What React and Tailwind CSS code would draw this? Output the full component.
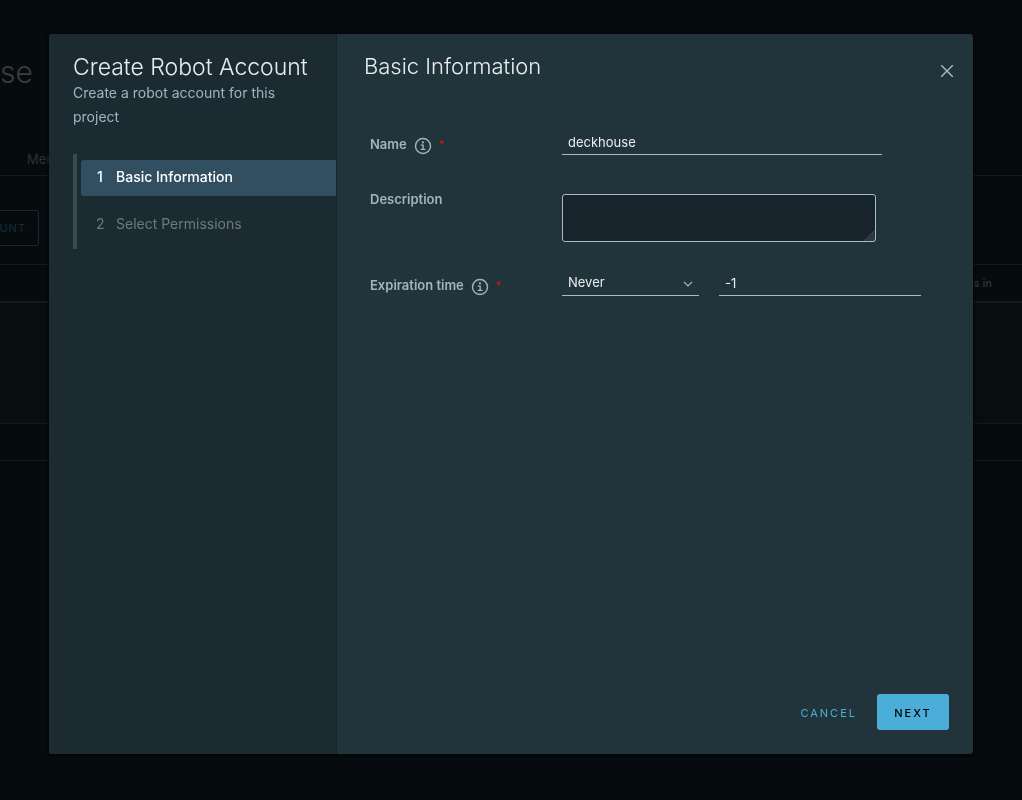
import { useState } from 'react';

const fieldBase =
  'block h-6 border-0 border-b border-[#acbac3] bg-transparent px-1.5 pb-0.5 text-[13px] text-[#e9ecef] outline-none';

const labelBase = 'flex w-48 shrink-0 items-center gap-[7px] pt-px text-[13px] leading-6 font-semibold text-[#a3b4be]';

const steps = ['Basic Information', 'Select Permissions'];

const InfoIcon = () => (
  <svg viewBox="0 0 36 36" className="mt-1 size-[18px]" fill="currentColor" aria-hidden="true">
    <circle cx="18" cy="18" r="15" fill="none" stroke="currentColor" strokeWidth="2.8" />
    <circle cx="17.9" cy="10.8" r="2.2" />
    <path d="M13.4 15h6.2v8.6H23V26H13.4v-2.4H17v-6.2h-3.6z" />
  </svg>
);

const CloseIcon = () => (
  <svg viewBox="0 0 12 12" className="size-3" fill="none" stroke="currentColor" strokeWidth="1.4" aria-hidden="true">
    <path d="M0.4 0.4 11.6 11.6M11.6 0.4 0.4 11.6" strokeLinecap="round" />
  </svg>
);

const Required = () => <span className="text-[11px] text-[#c21d00]">*</span>;

/* Project page behind the dialog */
const ProjectPage = () => (
  <div className="min-h-screen overflow-hidden bg-[#060b0e] pt-[54px]">
    <h1 className="text-[30px] leading-9 font-light text-[#3a3c3d]">se</h1>

    <nav className="mt-[51px] flex h-[35px] border-b border-[#14191c] pl-[27px]">
      <a href="#members" className="pt-1.5 text-[13px] leading-6 text-[#2c3134]">
        Members
      </a>
    </nav>

    <button className="mt-[34px] flex h-9 w-[39px] items-center justify-end rounded-r-[3px] border border-l-0 border-[#132b38] pr-3 text-[11px] tracking-[1px] text-[#132b38]">
      UNT
    </button>

    <table className="mt-[18px] w-full border-collapse text-[11px] text-[#2c3134]">
      <thead>
        <tr className="h-[37px] border-t border-b-2 border-[#14191c]">
          <th className="pr-[30px] text-right font-semibold">Expires in</th>
        </tr>
      </thead>
      <tbody>
        <tr className="h-[122px] border-b border-[#14191c] bg-[#080e10]">
          <td />
        </tr>
        <tr className="h-[37px] border-b border-[#14191c]">
          <td />
        </tr>
      </tbody>
    </table>
  </div>
);

const Stepper = ({ current, onSelect }) => (
  <ol className="mt-[25px] flex flex-col gap-[11px] border-l-4 border-[#3c4a4f] py-1.5 pl-1">
    {steps.map((step, i) => (
      <li key={step}>
        <button
          onClick={() => onSelect(i)}
          className={`flex h-9 w-full items-center gap-3 rounded-l-[3px] pb-0.5 pl-[15px] text-left text-sm ${
            i === current ? 'bg-[#324f62] font-medium text-white' : 'text-[#6d7a81]'
          }`}
        >
          <span className="w-2 text-center">{i + 1}</span>
          {step}
        </button>
      </li>
    ))}
  </ol>
);

const App = () => {
  const [step, setStep] = useState(0);
  const [name, setName] = useState('deckhouse');
  const [description, setDescription] = useState('');
  const [days, setDays] = useState('-1');

  return (
    <div className="font-['Inter','Open_Sans',sans-serif]">
      <ProjectPage />

      <div className="fixed inset-0 px-[49px] pt-[34px]">
        <div
          role="dialog"
          aria-labelledby="wizard-title"
          className="flex h-[90vh] overflow-hidden rounded-[3px] bg-[#22343b] shadow-[0_1px_2px_2px_rgba(0,0,0,0.4)]"
        >
          {/* Steps */}
          <aside className="w-72 shrink-0 border-r border-[#18242b] bg-[#1c2a32] pt-5 pl-6">
            <h2 id="wizard-title" className="text-[23px] leading-[27px] font-light whitespace-nowrap text-[#e9ecef]">
              Create Robot Account
            </h2>
            <p className="pr-6 text-sm leading-6 text-[#a3b4be]">Create a robot account for this project</p>
            <Stepper current={step} onSelect={setStep} />
          </aside>

          {/* Page */}
          <section className="flex min-w-0 flex-1 flex-col">
            <header className="flex items-start justify-between pt-5 pr-5 pl-[27px]">
              <h3 className="text-[22px] leading-6 font-light text-[#e9ecef]">Basic Information</h3>
              <button aria-label="Close" className="pt-[11px] text-[#acbac3]">
                <CloseIcon />
              </button>
            </header>

            <form className="mt-[53px] flex flex-1 flex-col gap-[30px] pr-6 pl-[33px]">
              <div className="flex items-start">
                <label htmlFor="name" className={labelBase}>
                  Name <InfoIcon /> <Required />
                </label>
                <input
                  id="name"
                  value={name}
                  onChange={(e) => setName(e.target.value)}
                  className={`${fieldBase} w-80`}
                />
              </div>

              <div className="flex items-start">
                <label htmlFor="description" className={labelBase}>
                  Description
                </label>
                <div className="relative mt-2">
                  <textarea
                    id="description"
                    value={description}
                    onChange={(e) => setDescription(e.target.value)}
                    className="block h-12 w-[314px] resize-none rounded-[3px] border border-[#acbac3] bg-[#17242b] px-2 py-1 text-[13px] text-[#e9ecef] outline-none"
                  />
                  <svg
                    viewBox="0 0 11 11"
                    className="pointer-events-none absolute right-px bottom-px size-[11px]"
                    fill="none"
                    stroke="#6b7175"
                    strokeWidth="0.8"
                    aria-hidden="true"
                  >
                    <path d="M0.5 11 11 0.5M3.5 11 11 3.5M6.5 11 11 6.5M9 11l2-2" />
                  </svg>
                </div>
              </div>

              <div className="flex items-start">
                <label htmlFor="expiration" className={labelBase}>
                  Expiration time <InfoIcon /> <Required />
                </label>
                <div className="relative">
                  <select id="expiration" className={`${fieldBase} w-[137px] appearance-none`}>
                    <option>Never</option>
                  </select>
                  <svg
                    viewBox="0 0 10 6"
                    className="pointer-events-none absolute top-[9px] right-1.5 h-1.5 w-2.5"
                    fill="none"
                    stroke="#acbac3"
                    strokeWidth="1.2"
                    aria-hidden="true"
                  >
                    <path d="M1 0.8 5 4.8 9 0.8" />
                  </svg>
                </div>
                <input
                  aria-label="Days until expiration"
                  value={days}
                  onChange={(e) => setDays(e.target.value)}
                  className={`${fieldBase} ml-5 w-[202px]`}
                />
              </div>
            </form>

            <footer className="flex justify-end gap-1 px-6 pb-6">
              <button className="h-9 px-4 pt-0.5 text-[11px] tracking-[2px] text-[#4aaed9]">CANCEL</button>
              <button
                onClick={() => setStep(1)}
                className="h-9 w-[72px] rounded-[3px] bg-[#4aaed9] pt-0.5 text-[11px] font-medium tracking-[2px] text-black"
              >
                NEXT
              </button>
            </footer>
          </section>
        </div>
      </div>
    </div>
  );
};

export default App;
